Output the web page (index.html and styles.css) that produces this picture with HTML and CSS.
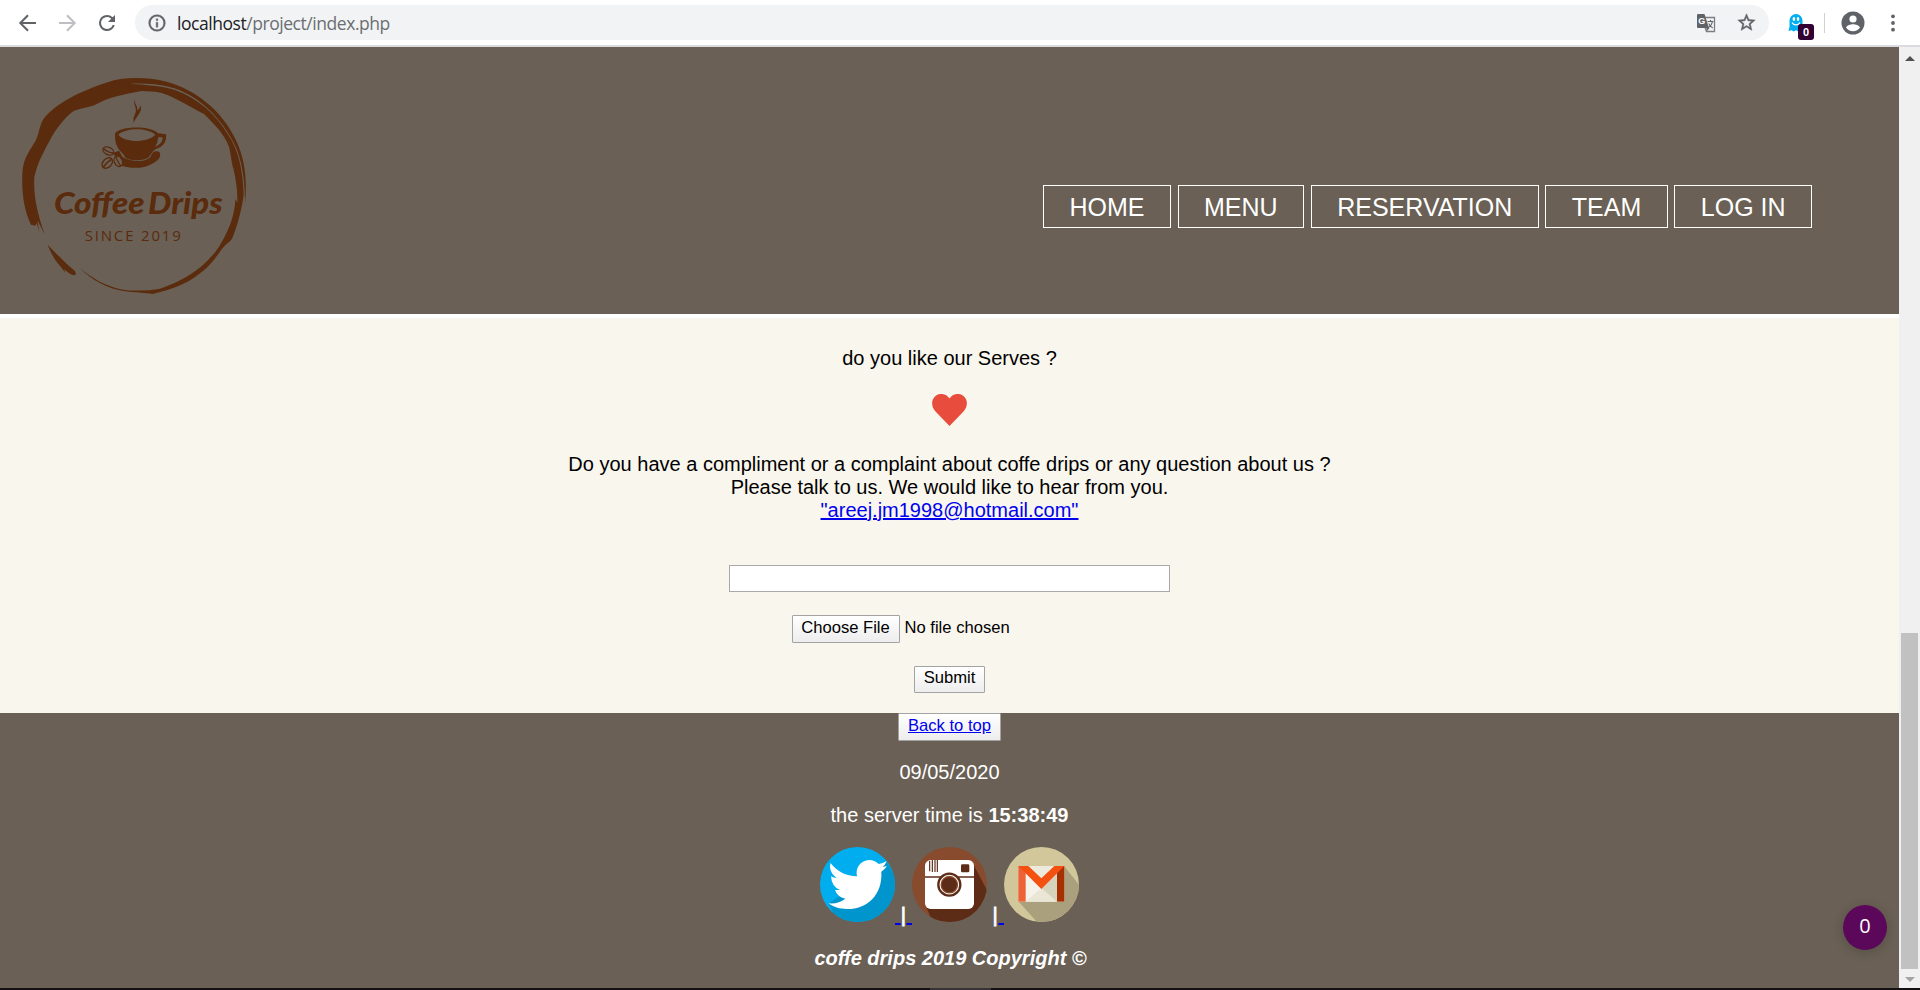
FILE: index.html
```html
<!DOCTYPE html>
<html lang="en">
<head>
<meta charset="utf-8">
<title>Coffee Drips</title>
<link rel="stylesheet" href="styles.css">
</head>
<body>
<div class="toolbar">
  <svg class="tool back" viewBox="0 0 24 24"><path d="M20 12H4.5M12 4.3L4.3 12l7.7 7.7" fill="none" stroke="#5f6368" stroke-width="2"/></svg>
  <svg class="tool forward" viewBox="0 0 24 24"><path d="M4 12h15.500M12 4.3l7.700 7.700-7.700 7.700" fill="none" stroke="#bdbfc2" stroke-width="2"/></svg>
  <svg class="tool reload" viewBox="0 0 24 24"><path d="M17.650 6.350A7.960 7.960 0 0 0 12 4a8 8 0 1 0 7.730 10h-2.080A6 6 0 1 1 12 6c1.660 0 3.140.690 4.220 1.780L13 11h7V4z" fill="#5f6368"/></svg>
  <div class="address">
    <svg class="info" viewBox="0 0 24 24"><path d="M11 17h2v-6h-2zm1-15a10 10 0 1 0 0 20 10 10 0 0 0 0-20zm0 18a8 8 0 1 1 0-16 8 8 0 0 1 0 16zM11 9h2V7h-2z" fill="#5f6368" stroke="#5f6368" stroke-width=".5"/></svg>
    <span class="url"><b>localhost</b>/project/index.php</span>
    <svg class="translate" viewBox="0 0 20 20"><path d="M8.500 4.500H18.500V18.500H10.500L8.500 13" fill="#f1f3f4" stroke="#7b7e82" stroke-width="1.300"/><path d="M2 1h6.500l4.500 14H2a1 1 0 0 1-1-1V2a1 1 0 0 1 1-1z" fill="#5f6368"/><path d="M10.500 15h3l-3 3.500z" fill="#5f6368"/><text x="2.300" y="11" class="translate-g">G</text><path d="M11.500 8.500h6M14.500 7v1.500M16.500 8.500c-.5 3-2.500 5-4 6M12.700 10.500c1 2 2.500 3.500 4 4.500" fill="none" stroke="#5f6368" stroke-width="1.100"/></svg>
    <svg class="star" viewBox="0 0 24 24"><path d="M22 9.240l-7.190-.62L12 2 9.190 8.630 2 9.240l5.460 4.730L5.820 21 12 17.270 18.180 21l-1.630-7.030zM12 15.400l-3.760 2.270 1-4.280-3.320-2.880 4.380-.38L12 6.100l1.710 4.040 4.380.38-3.320 2.880 1 4.280z" fill="#5f6368" stroke="#5f6368" stroke-width=".5"/></svg>
  </div>
  <div class="ghost">
    <svg viewBox="0 0 16 20"><path d="M1.500 7.500a6.500 6.500 0 0 1 13 0V15l1 3-3-.8-2 1.500-2.300-1.500-2.600 1.300-2-1.300-3.100.8 1-4z" fill="#00aef0"/><ellipse cx="5.900" cy="6" rx="1.300" ry="1.900" fill="#fff"/><ellipse cx="10" cy="6" rx="1.300" ry="1.900" fill="#fff"/><path d="M4 9.500c1.500 3.200 6.500 3.200 8 0" fill="none" stroke="#fff" stroke-width="1.200"/></svg>
    <span class="badge">0</span>
  </div>
  <span class="divider"></span>
  <svg class="person" viewBox="0 0 24 24"><circle cx="12" cy="12" r="11.500" fill="#5f6368"/><circle cx="12" cy="8" r="3.600" fill="#fff"/><path d="M5 16.500c1-2.500 4.500-3.300 7-3.300s6 .8 7 3.300c-1.500 2.300-4 3.800-7 3.800s-5.500-1.500-7-3.800z" fill="#fff"/></svg>
  <svg class="dots" viewBox="0 0 4 18"><circle cx="2" cy="2.300" r="1.900"/><circle cx="2" cy="9" r="1.900"/><circle cx="2" cy="15.700" r="1.900"/></svg>
</div>

<div class="window">
  <div class="page">
    <header class="header">
      <svg class="logo" viewBox="0 0 840 780">
        <g fill="#5a2b0d">
          <path d="M735 430C742 360 735 300 710 245C670 155 590 90 500 65C440 50 370 52 335 63C270 83 175 120 132 175C118 195 118 220 108 240C92 270 70 290 67 340C65 400 72 450 93 494L106 497L110 489L118 517L112 481L134 523C112 460 100 410 103 350C115 300 137 265 155 230C170 205 195 170 222 152C250 143 275 140 292 131C335 108 385 101 424 93C445 95 465 93 485 99C525 112 560 135 612 162C640 190 672 220 687 260C692 280 697 320 700 325C708 360 713 390 712 428L706 417C705 460 690 505 664 548C630 610 560 660 480 686C450 692 400 694 370 689C320 680 275 655 240 623C275 662 325 685 370 693C400 698 440 698 458 702C500 692 560 675 600 640C635 615 655 580 670 562C680 550 690 547 697 534C710 505 725 450 731 405C729 330 715 270 685 225C650 165 595 115 525 90C490 78 435 74 390 71C470 68 530 79 580 112C640 150 690 215 713 275C730 325 735 375 735 430z"/>
          <path d="M143 555C155 565 190 605 224 632Q231 642 224 646C210 644 200 634 192 627L196 638L181 619C164 600 152 578 143 555z"/>
          <path d="M404 115C398 135 413 145 406 160C401 170 399 177 401 189C406 175 420 163 423 148Q423 140 421 136Q418 150 412 151C414 136 402 133 404 115z"/>
          <path fill-rule="evenodd" d="M345 221C360 197 454 197 474 220L498 223C501 248 487 262 466 268C450 280 452 294 434 298C415 302 392 302 377 294C372 282 359 275 354 264C346 250 345 237 345 221zM355 224C374 249 443 249 466 224C444 202 377 202 355 224zM474 232C474 245 470 255 465 260C480 255 488 245 488 232z"/>
          <path d="M339 279L357 272L367 290C395 309 439 306 452 290C456 275 469 270 479 277C487 296 465 309 444 317C418 327 387 324 365 317z"/>
        </g>
        <g fill="#6a6055" stroke="#5a2b0d" stroke-width="4">
          <ellipse cx="325" cy="273" rx="17" ry="11" transform="rotate(25 325 273)"/><path d="M311 266Q322 277 341 279" fill="none"/>
          <ellipse cx="322" cy="309" rx="18" ry="13" transform="rotate(-45 322 309)"/><path d="M309 323Q320 306 335 298" fill="none"/>
          <ellipse cx="355" cy="304" rx="16" ry="12" transform="rotate(65 355 304)"/><path d="M347 291Q354 305 362 318" fill="none"/>
        </g>
        <text class="logo-name" x="162" y="461" textLength="272" lengthAdjust="spacingAndGlyphs">Coffee</text>
        <text class="logo-name" x="444" y="461" textLength="224" lengthAdjust="spacingAndGlyphs">Drips</text>
        <text class="logo-since" x="254" y="543" textLength="294" lengthAdjust="spacingAndGlyphs">SINCE 2019</text>
      </svg>
      <nav class="nav">
        <a>HOME</a>
        <a>MENU</a>
        <a>RESERVATION</a>
        <a>TEAM</a>
        <a>LOG IN</a>
      </nav>
    </header>
    <main class="contact">
      <p>do you like our Serves ?</p>
      <svg class="heart" viewBox="0 0 35 32"><path d="M17.500 32L3.500 17.500C-1 12.500-.8 6 3 2.500 7-1.500 14-.8 17.500 4.500 21-.8 28-1.500 32 2.500c3.800 3.500 4 10-.5 15z" fill="#e74c3c"/></svg>
      <p class="question">Do you have a compliment or a complaint about coffe drips or any question about us ?<br>Please talk to us. We would like to hear from you.<br><a class="link">"areej.jm1998@hotmail.com"</a></p>
      <form class="form">
        <input class="field" type="text" aria-label="Message">
        <div class="file"><span class="button choose">Choose File</span><span class="filename">No file chosen</span></div>
        <span class="button submit">Submit</span>
      </form>
    </main>
    <footer class="footer">
      <span class="button top"><a class="link">Back to top</a></span>
      <p class="date">09/05/2020</p>
      <p class="time">the server time is <b>15:38:49</b></p>
      <div class="social"><svg viewBox="0 0 225 225"><defs><clipPath id="disc"><circle cx="112.500" cy="112.500" r="112.500"/></clipPath></defs><g clip-path="url(#disc)"><path d="M0 0h225v225H0z" fill="#00aeef"/><path d="M198 43L240 105V240H60L26 170z" fill="#0095cc"/></g><path d="M32 48C50 73 78 87 111 88C105 61 123 40 147 39C160 39 170 45 176 51Q188 49 200 42Q196 54 187 60L201 57Q195 66 184 74C188 145 140 187 80 186C60 186 40 181 26 169Q54 172 76 155Q52 150 45 129H60Q35 120 33 88Q42 93 50 93C31 78 27 61 32 48z" fill="#fff"/></svg><a class="link">&nbsp;</a><span class="bar">|</span><a class="link">&nbsp;</a><svg viewBox="0 0 225 225"><g clip-path="url(#disc)"><path d="M0 0h225v225H0z" fill="#884b2d"/><path d="M183 50L225 130V225H62L43 180z" fill="#5c2c17"/></g><rect x="39" y="39" width="147" height="147" rx="17" fill="#fff"/><path d="M53 42v31M61 39v36M69 39v36M76 39v36" stroke="#5c2c17" stroke-width="3.500"/><path d="M39 90H186" stroke="#5c2c17" stroke-width="4"/><rect x="147" y="52" width="25" height="24" rx="4" fill="#5c2c17"/><circle cx="112" cy="113" r="33" fill="#fff" stroke="#5c2c17" stroke-width="7"/><circle cx="112" cy="113" r="24.500" fill="#5c2c17" stroke="#884b2d" stroke-width="4"/></svg> <span class="bar">|</span><a class="link">&nbsp;</a><svg viewBox="0 0 225 225"><g clip-path="url(#disc)"><path d="M0 0h225v225H0z" fill="#d2c79b"/><path d="M180 57L225 113V225H99L43 163z" fill="#aaa07d"/></g><path d="M43 57h138v107H43z" fill="#eceadc"/><path d="M65 79l47 45-47 40z" fill="#f5f3e9"/><path d="M159 79l-47 45 47 40z" fill="#d6d2bc"/><path d="M112 124L65 164h94z" fill="#e9e6d6"/><path d="M43 57h22v107H43z" fill="#ed6338"/><path d="M159 57h22v107h-22z" fill="#a73000"/><path d="M43 57h30l39 37 39-37h30L112 126z" fill="#f4500f"/></svg></div>
      <p class="copyright">coffe drips 2019 Copyright ©</p>
    </footer>
    <div class="bubble">0</div>
  </div>
  <div class="scrollbar">
    <span class="arrow up"></span>
    <span class="thumb"></span>
    <span class="arrow down"></span>
  </div>
</div>
<div class="taskbar"><span></span></div>
</body>
</html>
```

FILE: styles.css
```css
* { box-sizing: border-box; }
body { margin: 0; width: 1920px; height: 990px; overflow: hidden; display: flex; flex-direction: column; font: 20px/23px "Liberation Sans", Arial, sans-serif; color: #000; background: #fff; }
p { margin: 0; }
svg { display: block; flex: none; }

.toolbar { height: 47px; flex: none; display: flex; align-items: center; padding: 1px 20px 1px 16px; border-bottom: 2px solid #d9dbdf; }
.tool { width: 24px; height: 24px; }
.forward { margin-left: 15px; }
.reload { margin-left: 16px; }
.address { width: 1634px; height: 35px; margin-left: 16px; border-radius: 18px; background: #f1f3f4; display: flex; align-items: center; padding: 0 13px 0 12px; }
.info { width: 20px; height: 20px; }
.url { margin-left: 10px; font: 17.500px/24px "Open Sans", "Noto Sans", sans-serif; letter-spacing: -0.450px; color: #6b6e72; }
.url b { font-weight: normal; color: #202124; }
.translate { width: 20px; height: 20px; margin-left: auto; }
.translate-g { font: bold 9px "Liberation Sans", sans-serif; fill: #fff; }
.star { width: 21px; height: 21px; margin-left: 20px; margin-right: -1px; }
.ghost { position: relative; margin-left: 19px; width: 16px; }
.ghost svg { width: 16px; height: 20px; }
.badge { position: absolute; left: 10px; top: 11px; width: 16px; height: 16px; border-radius: 3px; background: #330033; color: #fff; font: bold 11px/17px "Liberation Sans", sans-serif; text-align: center; }
.divider { width: 1px; height: 20px; margin-left: 20px; background: #cfd1d4; }
.person { width: 24px; height: 24px; margin-left: 16px; }
.dots { width: 4px; height: 18px; margin-left: 26px; fill: #5f6368; }

.window { height: 941px; display: flex; }
.page { position: relative; width: 1899px; display: flex; flex-direction: column; }
.header { height: 271px; border-bottom: 4px solid #fff; background: #6a6055; display: flex; justify-content: space-between; align-items: flex-start; padding: 13px 87px 0 0; }
.logo { width: 280px; height: 260px; margin-bottom: -10px; }
.logo-name { font: italic 900 92px Lato, sans-serif; fill: #5a2b0d; }
.logo-since { font: 41px "Open Sans", sans-serif; letter-spacing: 5px; fill: #5a2b0d; }
.nav { display: flex; gap: 6.800px; margin-top: 125px; color: #fff; font-size: 25px; line-height: 29px; }
.nav a { height: 43px; padding: 7px 25.400px 0; border: 1px solid #fff; white-space: nowrap; }

.contact { height: 395px; background: #f9f6ee; display: flex; flex-direction: column; align-items: center; padding-top: 29px; text-align: center; }
.heart { width: 35px; height: 32px; margin-top: 24px; }
.question { margin-top: 27px; }
.link { color: #0000ee; text-decoration: underline; }
.form { display: flex; flex-direction: column; align-items: center; margin-top: 43px; font-size: 16px; line-height: 18px; }
.field { width: 441px; height: 27px; border: 1px solid #a9a9a9; background: #fff; padding: 1px 4px; }
.file { width: 316px; display: flex; align-items: center; gap: 5px; margin: 23px 0; }
.filename { margin-bottom: 3px; font-size: 16.600px; }
.button { display: flex; justify-content: center; border: 1px solid #a3a3a3; border-radius: 1px; background: linear-gradient(#fff, #ededed); font-size: 16.600px; line-height: 18px; padding-top: 2px; white-space: nowrap; }
.choose { width: 108px; height: 28px; padding-top: 3px; }
.submit { width: 71px; height: 27px; }

.footer { height: 275px; background: #6a6055; color: #fff; display: flex; flex-direction: column; align-items: center; }
.top { width: 103px; height: 28px; padding-top: 3px; }
.date { margin-top: 20px; }
.time { margin-top: 20px; }
.social { margin-top: 20px; height: 80px; white-space: nowrap; }
.social svg { display: inline-block; width: 75px; height: 75px; vertical-align: baseline; }
.bar { padding-right: 0.600px; -webkit-text-stroke: 0.800px #fff; }
.copyright { margin-top: 20px; padding-left: 2px; font-weight: bold; font-style: italic; }

.bubble { position: absolute; left: 1843px; top: 858px; width: 44px; height: 45px; border-radius: 50%; background: #5b085b; color: #fff; font: 20px/42px "Open Sans", sans-serif; text-align: center; box-shadow: 0 2px 12px rgba(0, 0, 0, .2); }

.scrollbar { width: 21px; background: #f0f0f0; display: flex; flex-direction: column; align-items: center; padding: 9px 0 6px; }
.arrow { border: 5px solid transparent; width: 0; height: 0; }
.up { border-top: 0; border-bottom-color: #505050; }
.down { border-bottom: 0; border-top-color: #a3a3a3; }
.thumb { width: 17px; height: 336px; margin: auto 0 8px; background: #c1c1c1; }
.taskbar { height: 2px; background: #141112; padding-left: 930px; }
.taskbar span { display: block; width: 61px; height: 2px; background: #383334; }
```
